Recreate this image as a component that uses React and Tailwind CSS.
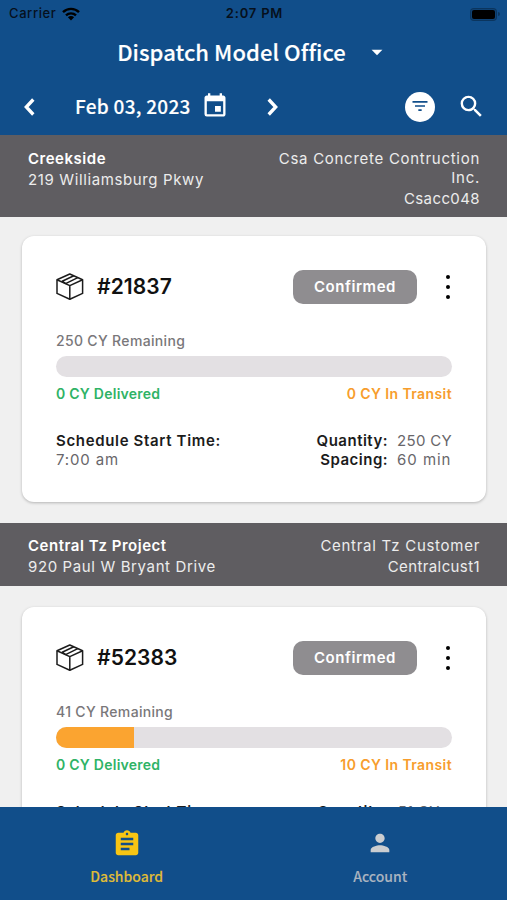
import { MdArrowDropDown, MdAssignment, MdEvent, MdFilterList, MdPerson, MdSearch } from 'react-icons/md'

const jobs = [
  {
    id: '21837',
    project: 'Creekside',
    address: '219 Williamsburg Pkwy',
    customer: 'Csa Concrete Contruction Inc.',
    customerCode: 'Csacc048',
    status: 'Confirmed',
    quantity: 250,
    remaining: 250,
    delivered: 0,
    inTransit: 0,
    startTime: '7:00 am',
    spacing: '60 min',
  },
  {
    id: '52383',
    project: 'Central Tz Project',
    address: '920 Paul W Bryant Drive',
    customer: 'Central Tz Customer',
    customerCode: 'Centralcust1',
    status: 'Confirmed',
    quantity: 51,
    remaining: 41,
    delivered: 0,
    inTransit: 10,
    startTime: '7:00 am',
    spacing: '60 min',
  },
]

const BoxIcon = () => (
  <svg width="28" height="28" viewBox="0 0 28 28" fill="none" stroke="#1c1c1c" strokeWidth="1.5" strokeLinejoin="round">
    <path d="M13.8 1 26.6 6.8v13.6L13.8 26.2 1 20.4V6.8z" />
    <path d="M1 6.8l12.8 5.8L26.6 6.8M13.8 12.6v13.6" />
    <path d="M17.8 2.8 6.2 8.2l3.4 2.5M21.8 4.6 9.6 10.7" />
  </svg>
)

const Chevron = ({ className }) => (
  <svg width="11" height="18" viewBox="0 0 11 18" fill="none" stroke="white" strokeWidth="3.3" className={className}>
    <path d="M9.3 1.5 2.3 9l7 7.5" />
  </svg>
)

const StatusBar = () => (
  <div className="flex h-[28px] items-center justify-between pl-[9px] pr-[7px] font-['Inter',sans-serif] text-[13px] text-[#06101c]">
    <div className="flex w-[120px] items-center gap-[6px]">
      <span className="tracking-[0.6px]">Carrier</span>
      <svg width="18" height="14" viewBox="0 0 18 14" fill="none" stroke="#000" strokeWidth="2.4">
        <path d="M1 5.2a11.4 11.4 0 0 1 16 0" />
        <path d="M4 8.4a7.2 7.2 0 0 1 10 0" />
        <path d="M9 13.4 5.9 10.3a4.4 4.4 0 0 1 6.2 0z" fill="#000" stroke="none" />
      </svg>
    </div>
    <span className="font-semibold tracking-[0.8px]">2:07 PM</span>
    <div className="flex w-[120px] items-center justify-end gap-px">
      <div className="h-[13px] w-[27px] rounded-[4px] border border-black/20 bg-black/15 p-px">
        <div className="h-full rounded-[2px] bg-black" />
      </div>
      <div className="h-[4px] w-[2px] rounded-r-full bg-black/30" />
    </div>
  </div>
)

const Header = () => (
  <header className="h-[135px] shrink-0 bg-[#114e8a] font-['Noto_Sans_CJK_JP',sans-serif] font-medium text-white">
    <StatusBar />
    <div className="flex h-[48px] items-center justify-center gap-[18px]">
      <h1 className="-mt-[2px] text-[22px] tracking-[0.06px] [-webkit-text-stroke:0.15px]">Dispatch Model Office</h1>
      <MdArrowDropDown size={26} />
    </div>
    <div className="flex h-[61px] items-center pl-[24px] pr-[21px]">
      <Chevron />
      <span className="ml-[40px] w-[118px] whitespace-nowrap text-[19px] tracking-[0.28px] [-webkit-text-stroke:0.15px]">Feb 03, 2023</span>
      <MdEvent size={28} className="-mt-px ml-[8px]" />
      <Chevron className="ml-[38px] rotate-180" />
      <div className="ml-auto flex size-[30px] items-center justify-center rounded-full bg-white">
        <MdFilterList size={20} className="-mt-px text-[#114e8a]" />
      </div>
      <MdSearch size={29} className="ml-[22px]" />
    </div>
  </header>
)

const SectionHeader = ({ job }) => (
  <div className="flex justify-between bg-[#5f5d61] px-[28px] pb-[10px] pt-[13px] text-[15px] leading-[19px] text-[#ececec] group-first:pt-[14px] group-first:pb-[9px]">
    <div>
      <p className="font-semibold tracking-[0.52px] text-white">{job.project}</p>
      <p className="mt-[2px] tracking-[0.62px]">{job.address}</p>
    </div>
    <div className="-mr-px w-[210px] text-right tracking-[0.72px]">
      <p>{job.customer}</p>
      <p className="mt-[2px] tracking-[0.4px]">{job.customerCode}</p>
    </div>
  </div>
)

const JobCard = ({ job }) => (
  <div className="mb-[21px] ml-[22px] mr-[21px] mt-[21px] h-[266px] rounded-[12px] bg-white px-[34px] pt-[34px] shadow-[0_1px_3px_rgba(0,0,0,0.25)] group-first:mt-[18.5px]">
    <div className="flex h-[34px] items-center">
      <BoxIcon />
      <span className="ml-[13px] text-[21px] font-semibold tracking-[0.1px] text-[#111]">#{job.id}</span>
      <span className="ml-auto flex h-[34px] w-[124px] items-center justify-center rounded-[10px] bg-[#8f8d90] pt-[2px] text-[15px] font-semibold tracking-[0.55px] text-white">
        {job.status}
      </span>
      <div className="ml-[29px] mr-[2px] flex flex-col gap-[6px]">
        <span className="size-[4px] rounded-full bg-black" />
        <span className="size-[4px] rounded-full bg-black" />
        <span className="size-[4px] rounded-full bg-black" />
      </div>
    </div>

    <p className="mt-[28px] text-[14px] font-medium leading-[18px] tracking-[0.33px] text-[#79777a]">{job.remaining} CY Remaining</p>
    <div className="mt-[6.5px] h-[21px] overflow-hidden rounded-full bg-[#e3e0e3]">
      <div className="h-full bg-[#fba430]" style={{ width: `${(job.inTransit / job.quantity) * 100}%` }} />
    </div>
    <div className="mt-[7.5px] flex justify-between text-[14px] font-semibold leading-[18px]">
      <span className="tracking-[0.25px] text-[#2fb366]">{job.delivered} CY Delivered</span>
      <span className="tracking-[0.4px] text-[#f79d2c]">{job.inTransit} CY In Transit</span>
    </div>

    <div className="mt-[28px] flex justify-between text-[15px] leading-[19px] text-[#68666a]">
      <div>
        <p className="font-semibold tracking-[0.66px] text-[#1c1c1c]">Schedule Start Time:</p>
        <p className="tracking-[0.85px]">{job.startTime}</p>
      </div>
      <div className="flex gap-[9px]">
        <div className="text-right font-semibold tracking-[0.5px] text-[#1c1c1c]">
          <p>Quantity:</p>
          <p>Spacing:</p>
        </div>
        <div>
          <p className="tracking-[0.3px]">{job.quantity} CY</p>
          <p className="tracking-[0.95px]">{job.spacing}</p>
        </div>
      </div>
    </div>
  </div>
)

const TabBar = () => (
  <nav className="grid h-[93px] shrink-0 grid-cols-2 bg-[#114e8a] pt-[22px] font-['Noto_Sans_CJK_JP',sans-serif] text-[14px] font-medium leading-[20px] [-webkit-text-stroke:0.1px]">
    <a className="flex flex-col items-center gap-[7px] text-[#e0bd36]">
      <MdAssignment size={30} className="text-[#f8c513]" />
      <span>Dashboard</span>
    </a>
    <a className="flex flex-col items-center gap-[7px] text-[#aab4c0]">
      <MdPerson size={28} className="mb-[2px] text-[#cbcdd0]" />
      <span>Account</span>
    </a>
  </nav>
)

const App = () => {
  return (
    <div className="flex h-[900px] w-[507px] flex-col overflow-hidden bg-[#f0f0f0] font-['Inter',sans-serif]">
      <Header />
      <main className="min-h-0 flex-1 overflow-hidden">
        {jobs.map((job) => (
          <section key={job.id} className="group">
            <SectionHeader job={job} />
            <JobCard job={job} />
          </section>
        ))}
      </main>
      <TabBar />
    </div>
  )
}

export default App
